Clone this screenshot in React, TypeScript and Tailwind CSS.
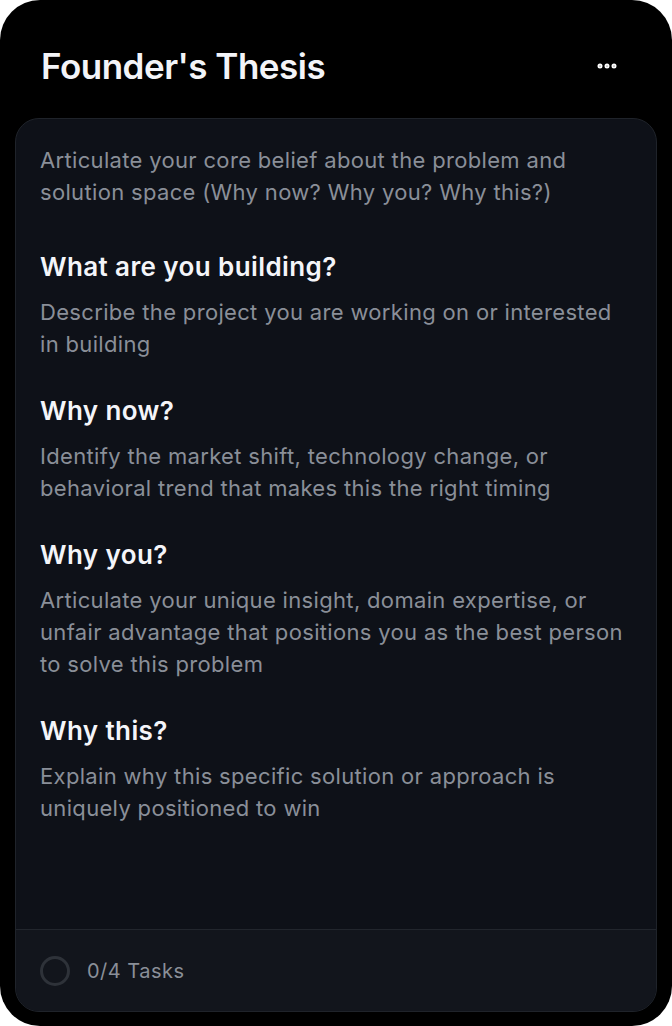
import { MoreHorizontal } from 'lucide-react';

const sections = [
  {
    title: 'What are you building?',
    body: 'Describe the project you are working on or interested in building',
  },
  {
    title: 'Why now?',
    body: 'Identify the market shift, technology change, or behavioral trend that makes this the right timing',
  },
  {
    title: 'Why you?',
    body: 'Articulate your unique insight, domain expertise, or unfair advantage that positions you as the best person to solve this problem',
  },
  {
    title: 'Why this?',
    body: 'Explain why this specific solution or approach is uniquely positioned to win',
  },
];

export default function App() {
  return (
    <div className="h-[1026px] w-[672px] bg-white font-['Inter',sans-serif]">
      <div className="flex h-full flex-col rounded-[40px] bg-black px-[15px] pb-[14px]">
        {/* Header */}
        <div className="flex h-[118px] shrink-0 items-center justify-between pb-[2px] pl-[26px] pr-[38px] pt-[16px]">
          <h1 className="text-[35px] font-semibold tracking-[-0.5px] text-[#f3f4f8]">Founder's Thesis</h1>
          <button className="text-white">
            <MoreHorizontal className="h-6 w-6" strokeWidth={3} />
          </button>
        </div>

        {/* Card */}
        <div className="flex flex-1 flex-col overflow-hidden rounded-[24px] border border-[#1f232a] bg-[#0e1118]">
          <div className="flex-1 px-6 pt-[25px]">
            <p className="text-[22px] leading-8 tracking-[0.33px] text-[#8a8f98]">
              Articulate your core belief about the problem and solution space (Why now? Why you? Why this?)
            </p>
            <div className="mt-[43px] flex flex-col gap-[35px]">
              {sections.map((s) => (
                <div key={s.title} className="flex flex-col gap-[13px]">
                  <h2 className="text-[26px] font-semibold leading-8 tracking-[0.4px] text-[#f4f5f9]">{s.title}</h2>
                  <p className="text-[22px] leading-8 tracking-[0.33px] text-[#8a8f98]">{s.body}</p>
                </div>
              ))}
            </div>
          </div>

          {/* Footer */}
          <div className="flex h-[82px] shrink-0 items-center gap-[17px] border-t border-[#22262d] bg-[#12151c] px-6">
            <span className="h-[30px] w-[30px] rounded-full border-[3px] border-[#2e3239]" />
            <span className="text-[20px] tracking-[0.5px] text-[#8a8f98]">0/4 Tasks</span>
          </div>
        </div>
      </div>
    </div>
  );
}
